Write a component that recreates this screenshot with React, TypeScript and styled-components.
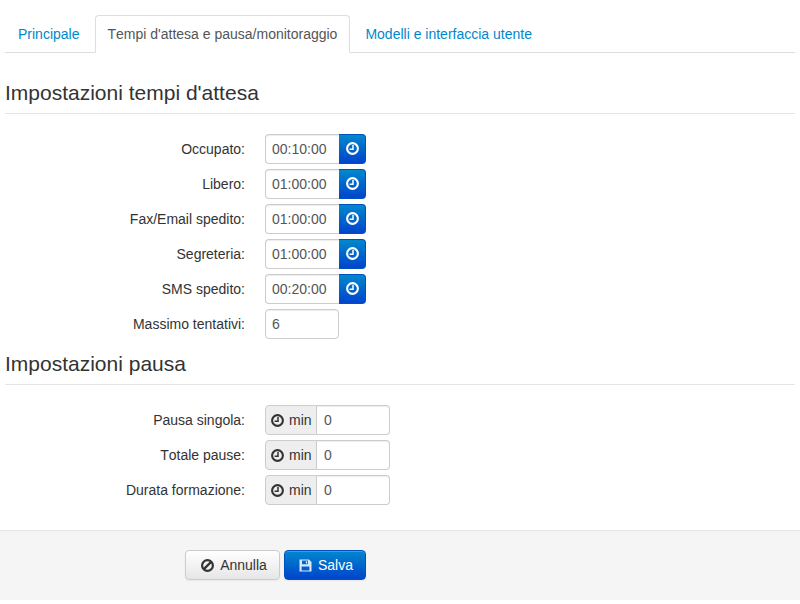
import React from "react";
import styled, { createGlobalStyle } from "styled-components";

const Global = createGlobalStyle`
  html, body { margin: 0; padding: 0; background: #fff; }
  body { font-family: "Liberation Sans", Arial, sans-serif; font-size: 14px; line-height: 20px; color: #333; font-kerning: none; }
  * { box-sizing: border-box; }
`;

const Page = styled.div`
  width: 800px;
  height: 604px;
  padding: 15px 5px 0;
  display: flex;
  flex-direction: column;
  overflow: hidden;
`;

const Tabs = styled.ul`
  list-style: none;
  margin: 0;
  padding: 0;
  display: flex;
  gap: 2px;
  height: 38px;
  border-bottom: 1px solid #ddd;
`;

const Tab = styled.li<{ $active?: boolean }>`
  height: 38px;
  padding: 8px 12px;
  border: 1px solid ${(p) => (p.$active ? "#ddd" : "transparent")};
  border-bottom-color: ${(p) => (p.$active ? "#fff" : "transparent")};
  border-radius: 4px 4px 0 0;
  background: ${(p) => (p.$active ? "#fff" : "transparent")};
  color: ${(p) => (p.$active ? "#555" : "#0088cc")};
  ${(p) => (p.$active ? "margin-left: 1px; padding-left: 11px;" : "")}
`;

const Heading = styled.h3<{ $top: number }>`
  margin: ${(p) => p.$top}px 0 20px;
  height: 33px;
  padding-bottom: 9px;
  border-bottom: 1px solid #e5e5e5;
  font-size: 21px;
  line-height: 23px;
  font-weight: 400;
  color: #333;
`;

const Rows = styled.div`
  display: flex;
  flex-direction: column;
  gap: 5px;
`;

const Row = styled.div`
  display: flex;
  align-items: center;
  height: 30px;
`;

const Label = styled.label`
  width: 240px;
  margin-right: 20px;
  text-align: right;
  color: #333;
`;

const Group = styled.div<{ $width: number }>`
  display: flex;
  width: ${(p) => p.$width}px;
  height: 30px;
`;

const Field = styled.div<{ $joined?: "left" | "right" }>`
  flex: 1;
  height: 30px;
  padding: 4px 6px;
  background: #fff;
  border: 1px solid #ccc;
  border-radius: ${(p) =>
    p.$joined === "left" ? "4px 0 0 4px" : p.$joined === "right" ? "0 4px 4px 0" : "4px"};
  ${(p) => (p.$joined === "right" ? "border-left: 0; padding-left: 7px;" : "")}
  ${(p) => (p.$joined === "left" ? "border-right: 0;" : "")}
  box-shadow: inset 0 1px 1px rgba(0, 0, 0, 0.075);
  color: #555;
`;

const ClockButton = styled.div`
  width: 27px;
  height: 30px;
  display: flex;
  align-items: center;
  justify-content: center;
  padding-bottom: 1px;
  background: linear-gradient(to bottom, #0088cc, #0044cc);
  border: 1px solid #0050c0;
  border-left: 0;
  border-radius: 0 4px 4px 0;
  color: #fff;
`;

const Addon = styled.div`
  width: 52px;
  height: 30px;
  padding-left: 5px;
  display: flex;
  align-items: center;
  justify-content: flex-start;
  gap: 5px;
  background: #eee;
  border: 1px solid #ccc;
  border-radius: 4px 0 0 4px;
  color: #333;
`;

const Footer = styled.div`
  margin: 25px -5px 0;
  height: 70px;
  padding: 19px 0 0 185px;
  display: flex;
  align-items: flex-start;
  gap: 4px;
  background: #f5f5f5;
  border-top: 1px solid #e5e5e5;
`;

const Button = styled.button<{ $primary?: boolean; $width: number }>`
  width: ${(p) => p.$width}px;
  height: 30px;
  padding: 0 0 0 ${(p) => (p.$primary ? 2 : 3)}px;
  display: flex;
  align-items: center;
  justify-content: center;
  gap: 6px;
  font: inherit;
  border-radius: 4px;
  border: 1px solid ${(p) => (p.$primary ? "#0050c0" : "#ccc")};
  color: ${(p) => (p.$primary ? "#fff" : "#333")};
  background: ${(p) =>
    p.$primary
      ? "linear-gradient(to bottom, #0088cc, #0044cc)"
      : "linear-gradient(to bottom, #ffffff, #e6e6e6)"};
  box-shadow: inset 0 1px 0 rgba(255, 255, 255, 0.2), 0 1px 2px rgba(0, 0, 0, 0.05);
`;

const Clock = () => (
  <svg width="13" height="13" viewBox="0 0 13 13" fill="none" stroke="currentColor">
    <circle cx="6.5" cy="6.5" r="5.4" strokeWidth="2.1" />
    <path d="M7 3V7.3H3.6" strokeWidth="1.5" />
  </svg>
);

const Ban = () => (
  <svg width="13" height="13" viewBox="0 0 13 13" fill="none" stroke="currentColor" strokeWidth="2.2">
    <circle cx="6.5" cy="6.5" r="5.4" />
    <path d="M2.6 10.4L10.4 2.6" />
  </svg>
);

const Save = () => (
  <svg width="13" height="13" viewBox="0 0 13 13">
    <path
      fill="currentColor"
      fillOpacity="0.85"
      fillRule="evenodd"
      d="M.5.5h9.5L12.5 3v9.5H.5V.5zM3 1.6v3.6h6V1.6H3zM6.9 2.2h1.3v2.3H6.9V2.2zM2.6 7.4v4h7.8v-4H2.6z"
    />
  </svg>
);

const timeouts = [
  ["Occupato:", "00:10:00"],
  ["Libero:", "01:00:00"],
  ["Fax/Email spedito:", "01:00:00"],
  ["Segreteria:", "01:00:00"],
  ["SMS spedito:", "00:20:00"],
];

const pauses = ["Pausa singola:", "Totale pause:", "Durata formazione:"];

export default function App() {
  return (
    <Page>
      <Global />
      <Tabs>
        <Tab>Principale</Tab>
        <Tab $active>Tempi d'attesa e pausa/monitoraggio</Tab>
        <Tab>Modelli e interfaccia utente</Tab>
      </Tabs>
      <Heading $top={28}>Impostazioni tempi d'attesa</Heading>
      <Rows>
        {timeouts.map(([label, value]) => (
          <Row key={label}>
            <Label>{label}</Label>
            <Group $width={101}>
              <Field $joined="left">{value}</Field>
              <ClockButton>
                <Clock />
              </ClockButton>
            </Group>
          </Row>
        ))}
        <Row>
          <Label>Massimo tentativi:</Label>
          <Group $width={74}>
            <Field>6</Field>
          </Group>
        </Row>
      </Rows>
      <Heading $top={13}>Impostazioni pausa</Heading>
      <Rows>
        {pauses.map((label) => (
          <Row key={label}>
            <Label>{label}</Label>
            <Group $width={125}>
              <Addon>
                <Clock />
                min
              </Addon>
              <Field $joined="right">0</Field>
            </Group>
          </Row>
        ))}
      </Rows>
      <Footer>
        <Button $width={95}>
          <Ban />
          Annulla
        </Button>
        <Button $primary $width={82}>
          <Save />
          Salva
        </Button>
      </Footer>
    </Page>
  );
}
